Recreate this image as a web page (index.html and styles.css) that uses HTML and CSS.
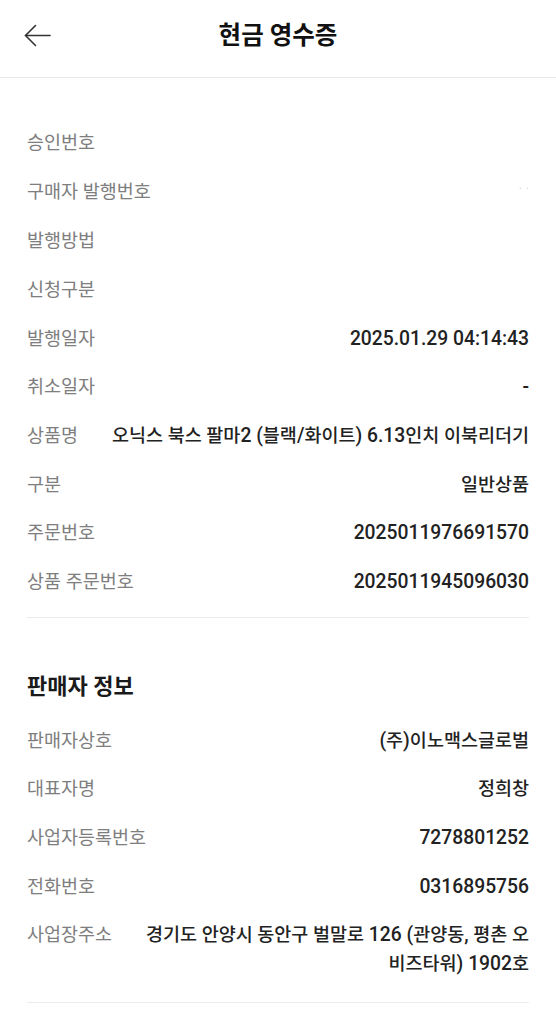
FILE: index.html
```html
<!DOCTYPE html>
<html lang="ko">
<head>
<meta charset="utf-8">
<title>현금 영수증</title>
<link rel="stylesheet" href="styles.css">
</head>
<body>
<header class="appbar">
  <div class="appbar-inner">
    <button class="back" aria-label="뒤로">
      <svg width="27" height="23" viewBox="0 0 27 23" fill="none" stroke="#333" stroke-width="1.6" stroke-linecap="round" stroke-linejoin="round">
        <path d="M1.5 11.5 H26"/>
        <path d="M11.5 1.5 L1.5 11.5 L11.5 21.5"/>
      </svg>
    </button>
    <h1 class="title">현금 영수증</h1>
    <span class="spacer"></span>
  </div>
</header>

<main class="content">
  <section class="block block-first">
    <div class="row"><span class="label">승인번호</span><span class="value"></span></div>
    <div class="row"><span class="label">구매자 발행번호</span><span class="value"><span class="faint">˙ ˙</span></span></div>
    <div class="row"><span class="label">발행방법</span><span class="value"></span></div>
    <div class="row"><span class="label">신청구분</span><span class="value"></span></div>
    <div class="row"><span class="label">발행일자</span><span class="value">2025.01.29 04:14:43</span></div>
    <div class="row"><span class="label">취소일자</span><span class="value">-</span></div>
    <div class="row"><span class="label">상품명</span><span class="value"><span class="k">오닉스 북스 팔마</span>2 (<span class="k">블랙</span>/<span class="k">화이트</span>) 6.13<span class="k">인치 이북리더기</span></span></div>
    <div class="row"><span class="label">구분</span><span class="value"><span class="k">일반상품</span></span></div>
    <div class="row"><span class="label">주문번호</span><span class="value">2025011976691570</span></div>
    <div class="row"><span class="label">상품 주문번호</span><span class="value">2025011945096030</span></div>
  </section>

  <section class="block block-seller">
    <h2 class="heading">판매자 정보</h2>
    <div class="row"><span class="label">판매자상호</span><span class="value">(<span class="k">주</span>)<span class="k">이노맥스글로벌</span></span></div>
    <div class="row"><span class="label">대표자명</span><span class="value"><span class="k">정희창</span></span></div>
    <div class="row"><span class="label">사업자등록번호</span><span class="value">7278801252</span></div>
    <div class="row"><span class="label">전화번호</span><span class="value">0316895756</span></div>
    <div class="row"><span class="label">사업장주소</span><span class="value"><span class="k">경기도 안양시 동안구 벌말로</span> 126 (<span class="k">관양동</span>, <span class="k">평촌 오 비즈타워</span>) 1902<span class="k">호</span></span></div>
  </section>
</main>
</body>
</html>
```

FILE: styles.css
```css
* { box-sizing: border-box; }

html, body {
  margin: 0;
  padding: 0;
  background: #ffffff;
}

body {
  font-family: Roboto, "Noto Sans CJK KR", sans-serif;
  color: #222222;
  width: 556px;
}

.appbar {
  height: 78px;
  border-bottom: 1px solid #e8e8e8;
  padding-bottom: 6px;
}

.appbar-inner {
  height: 71px;
  display: grid;
  grid-template-columns: 1fr auto 1fr;
  align-items: center;
}

.back {
  justify-self: start;
  margin-left: 24px;
  padding: 0;
  border: 0;
  background: none;
  display: flex;
  align-items: center;
}

.title {
  margin: 0;
  font-size: 24.5px;
  font-weight: 700;
  color: #111111;
  line-height: 32px;
  letter-spacing: 0;
}

.content {
  padding: 0 27px;
}

.block {
  border-bottom: 1px solid #ececec;
}

.block-first {
  padding-top: 41px;
  padding-bottom: 10px;
}

.block-seller {
  padding-top: 55px;
  padding-bottom: 13px;
}

.heading {
  margin: 0 0 16px;
  font-size: 22px;
  font-weight: 700;
  line-height: 28px;
  color: #1a1a1a;
}

.row {
  display: flex;
  gap: 30px;
  padding: 10px 0;
  line-height: 28.67px;
}

.label {
  flex: none;
  white-space: nowrap;
  font-size: 18.5px;
  color: #7e7e7e;
}

.value {
  flex: 1;
  text-align: right;
  font-size: 19.3px;
  font-weight: 500;
  color: #222222;
}

.value .k {
  font-size: 18.5px;
}

.faint {
  color: #dcdcdc;
  font-size: 14px;
  font-weight: 400;
}
```
